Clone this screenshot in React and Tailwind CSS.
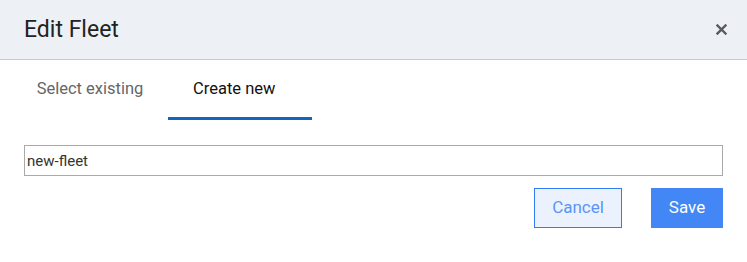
import React, { useState } from 'react'

const App = () => {
  const [tab, setTab] = useState('new')
  const [name, setName] = useState('new-fleet')

  return (
    <div className="w-[747px] h-[262px] bg-white font-['Roboto',sans-serif]">
      <div className="h-[60px] bg-[#edf0f5] border-b border-[#c8c8c8] flex items-center justify-between pl-6 pr-[18px]">
        <h1 className="text-[23px] text-[#222] leading-none pb-[1px]">Edit Fleet</h1>
        <button className="w-4 h-4 flex items-center justify-center text-[#5a5a5a]">
          <svg width="11" height="11" viewBox="0 0 11 11">
            <path d="M1.5 1.5 L9.5 9.5 M9.5 1.5 L1.5 9.5" stroke="currentColor" strokeWidth="2.4" strokeLinecap="square" />
          </svg>
        </button>
      </div>

      <div className="px-6">
        <div className="flex gap-[6px] -ml-[6px] h-[60px]">
          <button
            onClick={() => setTab('existing')}
            className={`w-[144px] h-full pt-[2px] text-[16.5px] border-b-[3px] ${tab === 'existing' ? 'text-black border-[#1565c0]' : 'text-[#666] border-transparent'}`}
          >
            Select existing
          </button>
          <button
            onClick={() => setTab('new')}
            className={`w-[144px] h-full pt-[2px] pl-[25px] text-left text-[16.5px] ${tab === 'new' ? 'text-[#111] border-[#1565c0]' : 'text-[#666] border-transparent'} border-b-[3px]`}
          >
            Create new
          </button>
        </div>

        <input
          value={name}
          onChange={(e) => setName(e.target.value)}
          className="mt-[25px] block w-[699px] h-[31px] border border-[#a9a9a9] px-[2px] text-[15px] text-[#333] outline-none"
        />

        <div className="flex justify-end gap-[29px] mt-[12px]">
          <button className="w-[88px] h-[40px] bg-[#ebf2fe] border border-[#2f7cf6] text-[#5a95f5] text-[17px]">Cancel</button>
          <button className="w-[72px] h-[40px] bg-[#4287f5] text-white text-[17px]">Save</button>
        </div>
      </div>
    </div>
  )
}

export default App
